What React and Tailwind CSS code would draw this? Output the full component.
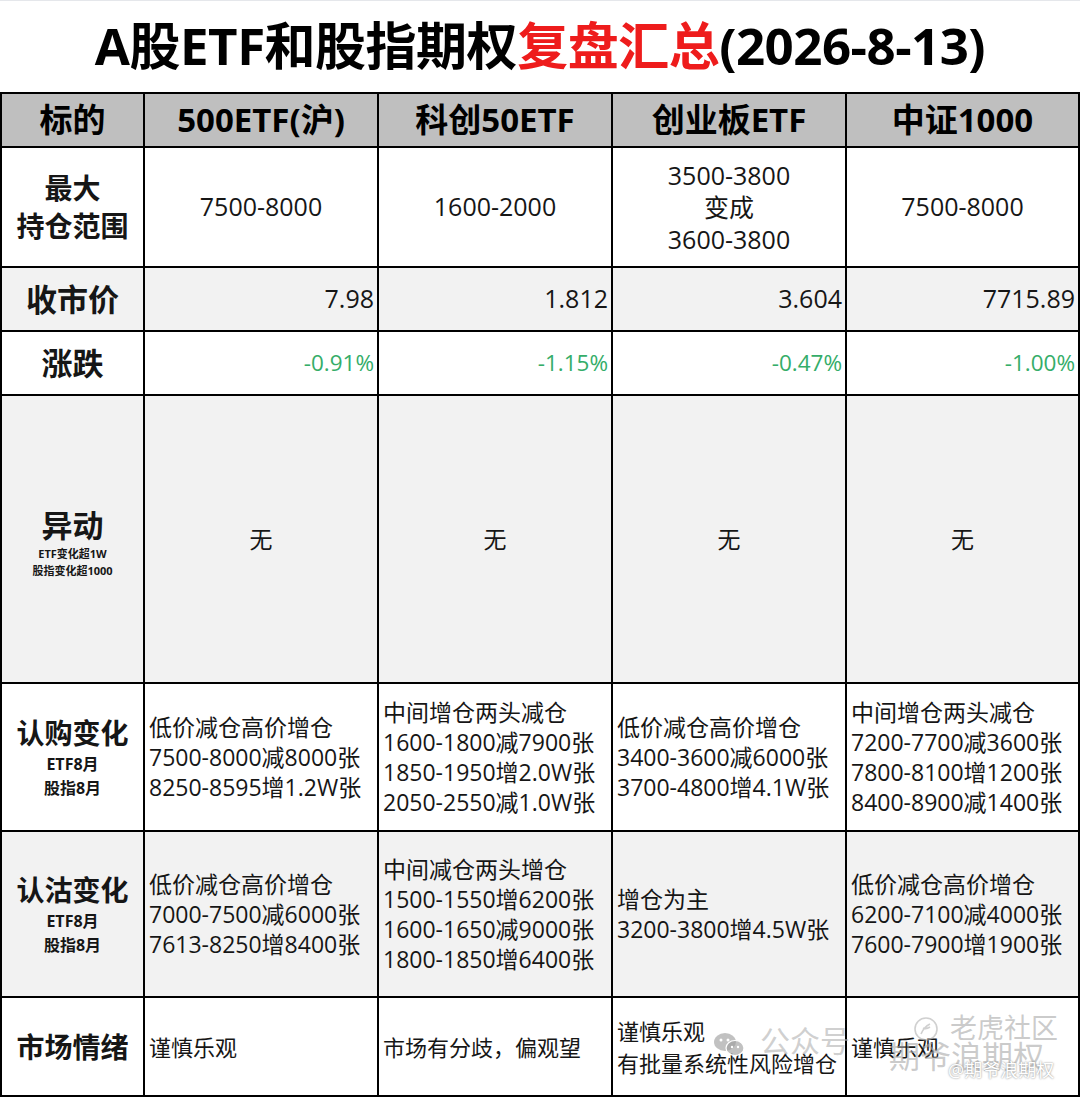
import React from "react";

const cols = ["500ETF(沪)", "科创50ETF", "创业板ETF", "中证1000"];
const widths = ["w-[234px]", "w-[234px]", "w-[234px]", "w-[233px]"];

function Label({ main, subs, subSize = "text-[16px]", mainSize = "text-[28px]" }) {
  return (
    <div className="flex flex-col items-center text-center">
      <div className={`${mainSize} font-bold leading-[38px]`}>{main}</div>
      {subs &&
        subs.map((s) => (
          <div key={s} className={`${subSize} font-bold leading-[1.5]`}>
            {s}
          </div>
        ))}
    </div>
  );
}

function Row({ h, bg, label, cells, align = "center" }) {
  const alignCls =
    align === "right"
      ? "justify-end text-right pr-[3px]"
      : align === "left"
      ? "justify-start text-left pl-[4px]"
      : "justify-center text-center";
  return (
    <div className={`flex ${h} ${bg}`}>
      <div className="w-[143px] shrink-0 flex items-center justify-center border-r-2 border-b-2 border-black">
        {label}
      </div>
      {cells.map((c, i) => (
        <div
          key={i}
          className={`${widths[i]} shrink-0 flex items-center ${alignCls} border-r-2 border-b-2 border-black`}
        >
          {c}
        </div>
      ))}
    </div>
  );
}

function Lines({ items, cls = "text-[23px] leading-[30px]" }) {
  return (
    <div className={`${cls} whitespace-nowrap`}>
      {items.map((t, i) => (
        <div key={i}>{t}</div>
      ))}
    </div>
  );
}

export default function App() {
  return (
    <div className="relative w-[1080px] h-[1097px] bg-white text-[#161616] font-['Open_Sans','Noto_Sans_CJK_SC',sans-serif] overflow-hidden">
      {/* 标题 */}
      <div className="h-[92px] flex items-center justify-center border-t border-gray-200">
        <h1 className="text-[51px] font-bold tracking-[-0.5px] text-black pb-[2px] whitespace-nowrap">
          A股ETF和股指期权<span className="text-[#ee1c1c]">复盘汇总</span>(2026-8-13)
        </h1>
      </div>

      {/* 表格 */}
      <div className="border-l-2 border-t-2 border-black">
        <div className="flex h-[54px] bg-[#bfbfbf] text-[33px] font-bold text-black">
          <div className="w-[143px] shrink-0 flex items-center justify-center border-r-2 border-b-2 border-black">
            标的
          </div>
          {cols.map((c, i) => (
            <div
              key={c}
              className={`${widths[i]} shrink-0 flex items-center justify-center border-r-2 border-b-2 border-black`}
            >
              {c}
            </div>
          ))}
        </div>

        <Row
          h="h-[120px]"
          bg="bg-white"
          label={<Label main={<>最大<br />持仓范围</>} />}
          cells={[
            <span className="text-[25px]">7500-8000</span>,
            <span className="text-[25px]">1600-2000</span>,
            <Lines cls="text-[25px] leading-[32px]" items={["3500-3800", "变成", "3600-3800"]} />,
            <span className="text-[25px]">7500-8000</span>,
          ]}
        />

        <Row
          h="h-[64px]"
          bg="bg-[#f2f2f2]"
          align="right"
          label={<Label main="收市价" mainSize="text-[31px]" />}
          cells={["7.98", "1.812", "3.604", "7715.89"].map((v) => (
            <span className="text-[25px]">{v}</span>
          ))}
        />

        <Row
          h="h-[64px]"
          bg="bg-white"
          align="right"
          label={<Label main="涨跌" mainSize="text-[31px]" />}
          cells={["-0.91%", "-1.15%", "-0.47%", "-1.00%"].map((v) => (
            <span className="text-[22.5px] text-[#35ad69]">{v}</span>
          ))}
        />

        <Row
          h="h-[288px]"
          bg="bg-[#f2f2f2]"
          label={
            <div className="flex flex-col items-center pt-[6px]">
              <div className="text-[31px] font-bold leading-[40px]">异动</div>
              <div className="text-[11px] font-bold leading-[17px]">ETF变化超1W</div>
              <div className="text-[11px] font-bold leading-[17px]">股指变化超1000</div>
            </div>
          }
          cells={["无", "无", "无", "无"].map((v) => (
            <span className="text-[23px]">{v}</span>
          ))}
        />

        <Row
          h="h-[148px]"
          bg="bg-white"
          align="left"
          label={<Label main="认购变化" subs={["ETF8月", "股指8月"]} />}
          cells={[
            <Lines items={["低价减仓高价增仓", "7500-8000减8000张", "8250-8595增1.2W张"]} />,
            <Lines items={["中间增仓两头减仓", "1600-1800减7900张", "1850-1950增2.0W张", "2050-2550减1.0W张"]} />,
            <Lines items={["低价减仓高价增仓", "3400-3600减6000张", "3700-4800增4.1W张"]} />,
            <Lines items={["中间增仓两头减仓", "7200-7700减3600张", "7800-8100增1200张", "8400-8900减1400张"]} />,
          ]}
        />

        <Row
          h="h-[166px]"
          bg="bg-[#f2f2f2]"
          align="left"
          label={<Label main="认沽变化" subs={["ETF8月", "股指8月"]} />}
          cells={[
            <Lines items={["低价减仓高价增仓", "7000-7500减6000张", "7613-8250增8400张"]} />,
            <Lines items={["中间减仓两头增仓", "1500-1550增6200张", "1600-1650减9000张", "1800-1850增6400张"]} />,
            <Lines items={["增仓为主", "3200-3800增4.5W张"]} />,
            <Lines items={["低价减仓高价增仓", "6200-7100减4000张", "7600-7900增1900张"]} />,
          ]}
        />

        <Row
          h="h-[99px]"
          bg="bg-white"
          align="left"
          label={<Label main="市场情绪" />}
          cells={[
            <Lines cls="text-[22px] leading-[32px]" items={["谨慎乐观"]} />,
            <Lines cls="text-[22px] leading-[32px]" items={["市场有分歧，偏观望"]} />,
            <Lines cls="text-[22px] leading-[32px]" items={["谨慎乐观", "有批量系统性风险增仓"]} />,
            <Lines cls="text-[22px] leading-[32px]" items={["谨慎乐观"]} />,
          ]}
        />
      </div>

      {/* 水印 */}
      <svg
        className="pointer-events-none absolute left-[713px] top-[1032px]"
        width="32"
        height="24"
        viewBox="0 0 32 24"
      >
        <ellipse cx="12" cy="10" rx="11" ry="9" fill="#a0a0a0" fillOpacity="0.65" />
        <circle cx="8" cy="8" r="1.5" fill="#fff" />
        <circle cx="15" cy="8" r="1.5" fill="#fff" />
        <ellipse cx="22" cy="16" rx="9" ry="7.5" fill="#a0a0a0" fillOpacity="0.65" stroke="#fff" strokeWidth="1.2" />
        <circle cx="19" cy="15" r="1.2" fill="#fff" />
        <circle cx="25" cy="15" r="1.2" fill="#fff" />
      </svg>
      <div className="pointer-events-none absolute left-[760px] top-[1026px] text-[30px] leading-none text-[#b0b0b0]/60 whitespace-nowrap">
        公众号<span className="ml-[8px]">·</span>
      </div>
      <div className="pointer-events-none absolute left-[889px] top-[1041px] text-[31px] leading-none text-[#a8a8a8]/60 whitespace-nowrap">
        期爷浪期权
      </div>
      <svg
        className="pointer-events-none absolute left-[912px] top-[1016px]"
        width="28"
        height="26"
        viewBox="0 0 28 26"
      >
        <circle cx="14" cy="13" r="11" fill="none" stroke="#b0b0b0" strokeOpacity="0.6" strokeWidth="1.6" />
        <path d="M9 18c2-5 5-8 9-10M11 12c2 1 4 1 7-1" fill="none" stroke="#b0b0b0" strokeOpacity="0.6" strokeWidth="1.6" />
      </svg>
      <div className="pointer-events-none absolute left-[950px] top-[1014px] text-[27px] leading-none text-[#a8a8a8]/60 whitespace-nowrap">
        老虎社区
      </div>
      <div className="pointer-events-none absolute left-[948px] top-[1061px] text-[18px] leading-none text-white [text-shadow:0_0_2px_#777] whitespace-nowrap">
        @期爷浪期权
      </div>
    </div>
  );
}
